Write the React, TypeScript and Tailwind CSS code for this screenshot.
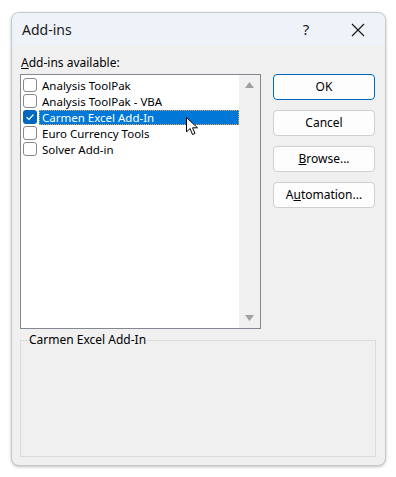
import React, { FC, useState } from 'react';

type Item = { name: string; checked: boolean };

const initialItems: Item[] = [
  { name: 'Analysis ToolPak', checked: false },
  { name: 'Analysis ToolPak - VBA', checked: false },
  { name: 'Carmen Excel Add-In', checked: true },
  { name: 'Euro Currency Tools', checked: false },
  { name: 'Solver Add-in', checked: false },
];

const font = { fontFamily: '"Noto Sans", "Open Sans", sans-serif' };

const CheckBox: FC<{ checked: boolean; selected: boolean }> = ({ checked, selected }) => {
  if (checked && selected) {
    return (
      <div className="w-[14px] h-[14px] rounded-[3px] bg-[#0067c0] flex items-center justify-center shrink-0">
        <svg width="10" height="10" viewBox="0 0 10 10">
          <path d="M1.5 5.2 L4 7.5 L8.5 2.5" fill="none" stroke="white" strokeWidth="1.2" />
        </svg>
      </div>
    );
  }
  return (
    <div className="w-[14px] h-[14px] rounded-[3px] border border-[#8a8a8a] bg-white flex items-center justify-center shrink-0">
      {checked && (
        <svg width="10" height="10" viewBox="0 0 10 10">
          <path d="M1.5 5.2 L4 7.5 L8.5 2.5" fill="none" stroke="#333" strokeWidth="1.2" />
        </svg>
      )}
    </div>
  );
};

const Button: FC<{ children: React.ReactNode; primary?: boolean }> = ({ children, primary }) => (
  <button
    className={
      primary
        ? 'h-[26px] w-[102px] rounded-[4px] border border-[#0067c0] bg-[#fdfdfd] text-[12px] text-black'
        : 'h-[26px] w-[102px] rounded-[4px] border border-[#d0d0d0] bg-[#fdfdfd] text-[12px] text-black'
    }
  >
    {children}
  </button>
);

const App: FC = () => {
  const [items, setItems] = useState(initialItems);
  const [selected, setSelected] = useState(2);

  const toggle = (i: number) => {
    setItems(items.map((it, j) => (j === i ? { ...it, checked: !it.checked } : it)));
  };

  return (
    <div className="w-[396px] h-[477px] bg-white pt-[12px] pl-[11px]" style={font}>
      <div className="w-[375px] h-[454px] rounded-[8px] border border-[#c8c8c8] bg-[#f0f0f0] overflow-hidden shadow-[0_1px_3px_rgba(0,0,0,0.25)] flex flex-col">
        <div className="h-[33px] bg-[#eef3f9] flex items-center pl-[10px] text-[14px] text-[#1a1a1a] shrink-0">
          <div className="flex-1">Add-ins</div>
          <div className="w-[46px] text-center text-[15px] mr-[6px]">?</div>
          <div className="w-[46px] mr-[4px] flex items-center justify-center">
            <svg width="14" height="14" viewBox="0 0 14 14">
              <path d="M1 1 L13 13 M13 1 L1 13" stroke="#1a1a1a" strokeWidth="1.2" />
            </svg>
          </div>
        </div>
        <div className="flex-1 px-[8px] pt-[9px] flex flex-col">
          <div className="text-[12px] text-black leading-[16px] pl-[1px]">
            <span className="underline">A</span>dd-ins available:
          </div>
          <div className="flex gap-[12px] mt-[3px]">
            <div className="w-[241px] h-[255px] border border-[#828790] bg-white flex">
              <div className="flex-1 pt-[2px]">
                {items.map((it, i) => (
                  <div
                    key={it.name}
                    className="h-[16px] flex items-center pl-[2px] text-[11.5px] cursor-default"
                    onClick={() => setSelected(i)}
                  >
                    <div onClick={() => toggle(i)}>
                      <CheckBox checked={it.checked} selected={selected === i} />
                    </div>
                    <div
                      className={
                        selected === i
                          ? 'flex-1 h-[15px] ml-[2px] pl-[2px] bg-[#0078d7] text-white border border-dotted border-[#e0a060] leading-[13px] relative'
                          : 'flex-1 h-[15px] ml-[2px] pl-[3px] leading-[15px] text-black'
                      }
                    >
                      {it.name}
                      {selected === i && (
                        <svg
                          className="absolute left-[146px] top-[6px]"
                          width="13"
                          height="19"
                          viewBox="0 0 13 19"
                        >
                          <path
                            d="M0.5 0.5 L0.5 15 L4 11.5 L6.5 17.5 L9 16.5 L6.5 10.8 L11.5 10.8 Z"
                            fill="white"
                            stroke="black"
                            strokeWidth="1"
                            strokeLinejoin="round"
                          />
                        </svg>
                      )}
                    </div>
                  </div>
                ))}
              </div>
              <div className="w-[21px] bg-[#f0f0f0] flex flex-col items-center justify-between py-[7px]">
                <svg width="9" height="6" viewBox="0 0 9 6">
                  <path d="M4.5 0 L9 6 L0 6 Z" fill="#a0a0a0" />
                </svg>
                <svg width="9" height="6" viewBox="0 0 9 6">
                  <path d="M0 0 L9 0 L4.5 6 Z" fill="#a0a0a0" />
                </svg>
              </div>
            </div>
            <div className="flex flex-col gap-[10px]">
              <Button primary>OK</Button>
              <Button>Cancel</Button>
              <Button>
                <span className="underline">B</span>rowse...
              </Button>
              <Button>
                A<span className="underline">u</span>tomation...
              </Button>
            </div>
          </div>
          <div className="relative mt-[11px] w-[356px] h-[117px] border border-[#dcdcdc]">
            <div className="absolute left-[8px] top-[-9px] bg-[#f0f0f0] pr-[1px] text-[12px] leading-[16px] text-black">
              {items[selected].name}
            </div>
          </div>
        </div>
      </div>
    </div>
  );
};

export default App;
